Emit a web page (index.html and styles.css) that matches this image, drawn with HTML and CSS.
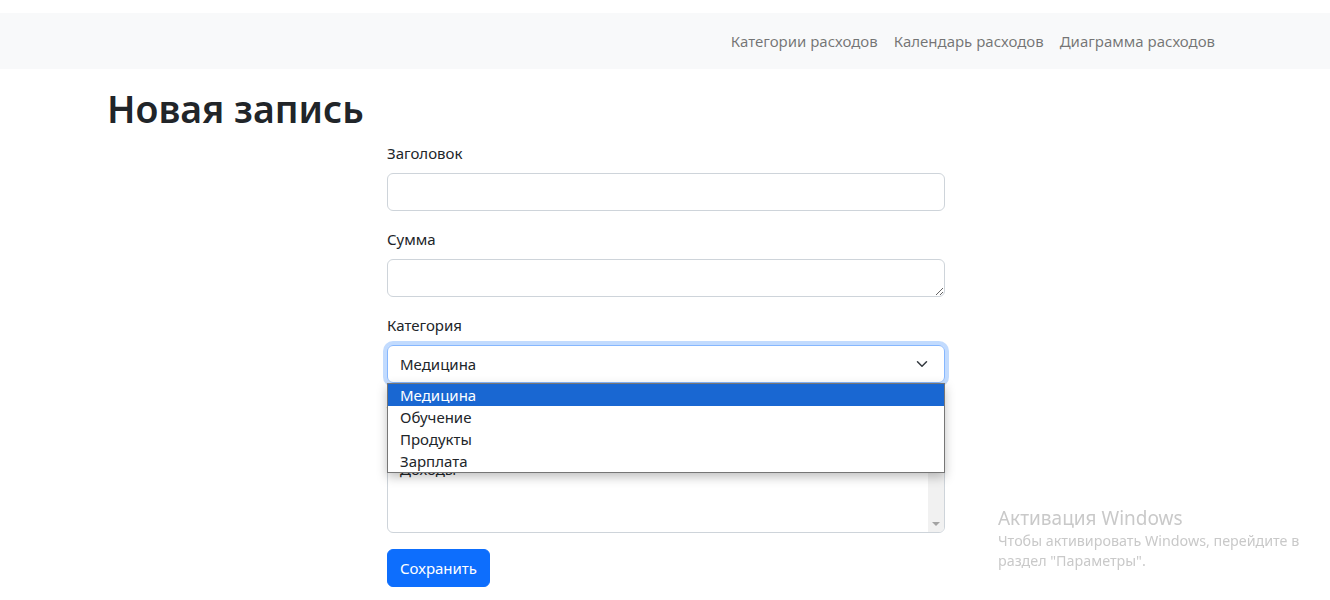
FILE: index.html
```html
<!DOCTYPE html>
<html lang="ru">
<head>
<meta charset="utf-8">
<title>Новая запись</title>
<link rel="stylesheet" href="styles.css">
</head>
<body>
<nav class="navbar">
  <div class="container nav-inner">
    <ul class="nav-links">
      <li><a class="nav-link" href="#">Категории расходов</a></li>
      <li><a class="nav-link" href="#">Календарь расходов</a></li>
      <li><a class="nav-link" href="#">Диаграмма расходов</a></li>
    </ul>
  </div>
</nav>
<main class="container">
  <h1 class="title">Новая запись</h1>
  <form class="entry-form">
    <div class="field">
      <label class="form-label">Заголовок</label>
      <input class="form-control" type="text">
    </div>
    <div class="field">
      <label class="form-label">Сумма</label>
      <textarea class="form-control textarea" rows="1"></textarea>
    </div>
    <div class="field select-field">
      <label class="form-label">Категория</label>
      <div class="form-select focused">
        <span>Медицина</span>
        <svg class="chevron" width="16" height="16" viewBox="0 0 16 16"><path d="M2 5l6 6 6-6" fill="none" stroke="#343a40" stroke-width="2" stroke-linecap="round" stroke-linejoin="round"/></svg>
      </div>
      <ul class="dropdown">
        <li class="opt active">Медицина</li>
        <li class="opt">Обучение</li>
        <li class="opt">Продукты</li>
        <li class="opt">Зарплата</li>
      </ul>
    </div>
    <div class="field">
      <label class="form-label">Тип</label>
      <div class="listbox">
        <ul class="listbox-opts">
          <li>Расходы</li>
          <li>Доходы</li>
        </ul>
        <div class="scrollbar">
          <span class="sb-arrow"></span>
        </div>
      </div>
    </div>
    <button class="btn-primary" type="button">Сохранить</button>
  </form>
</main>
<div class="watermark">
  <div class="wm-title">Активация Windows</div>
  <div class="wm-text">Чтобы активировать Windows, перейдите в<br>раздел "Параметры".</div>
</div>
</body>
</html>
```
FILE: styles.css
```css
* { box-sizing: border-box; }
html, body { margin: 0; }
body {
  padding-top: 13px;
  font-family: "Noto Sans", "Open Sans", sans-serif;
  font-size: 16px;
  line-height: 24px;
  color: #212529;
  background: #fff;
}
.container {
  width: 1140px;
  margin: 0 auto;
  padding: 0 12px;
}
.navbar {
  background: #f8f9fa;
  height: 56px;
  display: flex;
  align-items: center;
}
.nav-inner {
  display: flex;
  justify-content: flex-end;
}
.nav-links {
  list-style: none;
  margin: 0;
  padding: 0;
  display: flex;
}
.nav-link {
  display: block;
  padding: 8px;
  color: rgba(0,0,0,.55);
  text-decoration: none;
  font-size: 15px;
}
.title {
  font-size: 37.5px;
  font-weight: 600;
  line-height: 48px;
  margin: 16px 0 8px;
}
.entry-form {
  width: 558px;
  margin-left: 280px;
}
.field { margin-bottom: 16px; }
.select-field { position: relative; }
.form-label {
  display: block;
  margin-bottom: 8px;
  font-size: 15px;
}
.form-control {
  display: block;
  width: 100%;
  height: 38px;
  padding: 6px 12px;
  font: inherit;
  border: 1px solid #ced4da;
  border-radius: 6px;
  background: #fff;
}
.textarea { resize: vertical; }
.form-select {
  display: flex;
  align-items: center;
  justify-content: space-between;
  height: 38px;
  padding: 6px 16px 6px 12px;
  border: 1px solid #86b7fe;
  border-radius: 6px;
  box-shadow: 0 0 0 4px rgba(13,110,253,.25);
  font-size: 15px;
}
.chevron { width: 12px; height: 12px; }
.dropdown {
  position: absolute;
  left: 0;
  right: 0;
  top: 70px;
  margin: 0;
  padding: 0;
  list-style: none;
  background: #fff;
  border: 1px solid #767676;
  box-shadow: 0 4px 10px rgba(0,0,0,.25);
  z-index: 5;
}
.opt {
  height: 22px;
  line-height: 22px;
  padding-left: 12px;
  font-size: 15px;
}
.opt.active { background: #1967d2; color: #fff; }
.listbox {
  position: relative;
  height: 102px;
  border: 1px solid #ced4da;
  border-radius: 6px;
  overflow: hidden;
}
.listbox-opts {
  list-style: none;
  margin: 0;
  padding: 6px 12px;
  font-size: 15px;
  line-height: 21px;
}
.scrollbar {
  position: absolute;
  top: 0;
  right: 0;
  bottom: 0;
  width: 16px;
  background: #f1f1f1;
}
.sb-arrow {
  position: absolute;
  left: 4px;
  bottom: 6px;
  width: 0;
  height: 0;
  border-left: 4px solid transparent;
  border-right: 4px solid transparent;
  border-top: 4px solid #a3a3a3;
}
.btn-primary {
  height: 38px;
  padding: 6px 12px;
  font: inherit;
  font-size: 15px;
  color: #fff;
  background: #0d6efd;
  border: 1px solid #0d6efd;
  border-radius: 6px;
}
.watermark {
  position: fixed;
  left: 998px;
  top: 505px;
  color: #c9c9c9;
}
.wm-title { font-size: 19px; line-height: 26px; }
.wm-text { font-size: 14.3px; line-height: 20px; }
```
